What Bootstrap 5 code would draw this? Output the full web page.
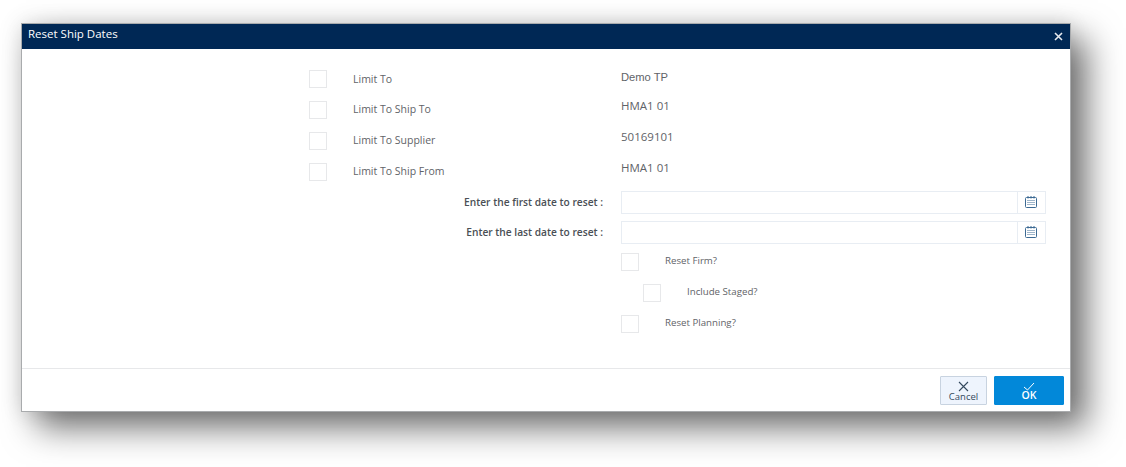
<!DOCTYPE html>
<html lang="en">
<head>
  <meta charset="UTF-8" />
  <meta name="viewport" content="width=device-width, initial-scale=1" />
  <title>Reset Ship Dates</title>
  <link href="https://cdn.jsdelivr.net/npm/bootstrap@5.3.2/dist/css/bootstrap.min.css" rel="stylesheet"/>
  <style>
    body {
      background: #fff;
      font-family: "Open Sans", sans-serif;
      font-size: 10.5px;
      color: #5f6368;
      padding: 23px 0 0 21px;
      min-height: 100vh;
    }
    .dlg {
      width: 1050px;
      height: 389px;
      border: 1px solid #a9abad;
      border-radius: 0;
      box-shadow: 16px 16px 32px rgba(0, 0, 0, 0.55), 0 0 20px rgba(0, 0, 0, 0.12);
    }
    .dlg-head {
      height: 25px;
      background: #002855;
      color: #fff;
      font-size: 11.5px;
      padding: 0 7px 0 6px;
      border-radius: 0 !important;
      border: 0;
    }
    .dlg-head span { margin-top: -6px; }
    .dlg-body { padding: 14px 0 0 287px; }
    .chk-row { height: 31px; }
    .chk {
      width: 18px;
      height: 18px;
      flex: none;
      border: 1px solid #e7e8ea;
      background: #fff;
    }
    .lbl { width: 294px; padding-left: 26px; padding-top: 1px; }
    .lbl-first { padding-top: 2px; }
    .val { font-size: 11.5px; margin-top: -7px; }
    .val-demo { font-family: "Liberation Sans", sans-serif; font-size: 11.2px; margin-top: -3px; }
    .date-row { height: 22px; margin-bottom: 8px; }
    .date-row.last-date { margin-bottom: 3px; }
    .date-lbl {
      width: 312px;
      text-align: right;
      font-weight: 600;
      font-size: 10.2px;
      color: #4a4f55;
      padding-right: 18px;
      padding-top: 2px;
    }
    .date-box {
      width: 425px;
      height: 23px;
      border: 1px solid #e8edf3;
    }
    .date-in { border: 0; outline: 0; min-width: 0; }
    .date-btn {
      width: 28px;
      border-left: 1px solid #e8edf3;
      padding-right: 1px;
    }
    .checks { padding-left: 312px; }
    .sub-row { padding-left: 22px; }
    .sub-row .chk, .top-row .chk { margin-right: 26px; }
    .checks .chk-row { font-size: 9.7px; }
    .checks .chk-row span { margin-top: 0; }
    .dlg-foot {
      height: 43px;
      background: #fff;
      border-top: 1px solid #e7e8ea;
      border-radius: 0 !important;
      padding: 7px 6px 0 0;
    }
    .act {
      height: 29px;
      font-weight: 600;
      line-height: 9px;
      border-radius: 1px;
      padding: 0;
    }
    .act svg { display: block; margin: 1px auto 0; }
    .act-cancel {
      width: 47px;
      font-size: 9.5px;
      font-weight: 500;
      background: #eef4fd;
      border: 1px solid #c8d3e0;
      color: #34495e;
      margin-right: 7px;
    }
    .act-ok {
      width: 70px;
      font-size: 10.5px;
      background: #0288d9;
      border: 1px solid #0288d9;
      color: #fff;
    }
  </style>
</head>
<body>

  <div class="card dlg">
    <div class="card-header dlg-head d-flex align-items-center justify-content-between">
      <span>Reset Ship Dates</span>
      <svg width="9" height="9" viewBox="0 0 9 9"><path d="M1 1l7 7M8 1L1 8" stroke="#e6e9ee" stroke-width="1.6"/></svg>
    </div>

    <div class="card-body dlg-body">
      <div class="d-flex align-items-center chk-row"><div class="chk"></div><div class="lbl lbl-first">Limit To</div><div class="val val-demo">Demo TP</div></div>
      <div class="d-flex align-items-center chk-row"><div class="chk"></div><div class="lbl">Limit To Ship To</div><div class="val">HMA1 01</div></div>
      <div class="d-flex align-items-center chk-row"><div class="chk"></div><div class="lbl">Limit To Supplier</div><div class="val">50169101</div></div>
      <div class="d-flex align-items-center chk-row mb-1"><div class="chk"></div><div class="lbl">Limit To Ship From</div><div class="val">HMA1 01</div></div>

      <div class="d-flex align-items-center date-row">
        <div class="date-lbl">Enter the first date to reset :</div>
        <div class="d-flex date-box">
          <input type="text" class="flex-grow-1 date-in" aria-label="First date" />
          <div class="d-flex align-items-center justify-content-center date-btn">
            <svg width="12" height="12" viewBox="0 0 12 12" fill="none"><rect x=".5" y="1.5" width="11" height="10" rx="1" stroke="#3d6a94"/><path d="M3 0v2.5M6 0v2.5M9 0v2.5" stroke="#3d6a94"/><path d="M2.5 4.5h7M2.5 6.5h7M2.5 8.5h7" stroke="#3d6a94" stroke-dasharray="1 1"/></svg>
          </div>
        </div>
      </div>
      <div class="d-flex align-items-center date-row last-date">
        <div class="date-lbl">Enter the last date to reset :</div>
        <div class="d-flex date-box">
          <input type="text" class="flex-grow-1 date-in" aria-label="Last date" />
          <div class="d-flex align-items-center justify-content-center date-btn">
            <svg width="12" height="12" viewBox="0 0 12 12" fill="none"><rect x=".5" y="1.5" width="11" height="10" rx="1" stroke="#3d6a94"/><path d="M3 0v2.5M6 0v2.5M9 0v2.5" stroke="#3d6a94"/><path d="M2.5 4.5h7M2.5 6.5h7M2.5 8.5h7" stroke="#3d6a94" stroke-dasharray="1 1"/></svg>
          </div>
        </div>
      </div>

      <div class="checks">
        <div class="d-flex align-items-center chk-row top-row"><div class="chk"></div><span>Reset Firm?</span></div>
        <div class="d-flex align-items-center chk-row sub-row"><div class="chk"></div><span>Include Staged?</span></div>
        <div class="d-flex align-items-center chk-row top-row"><div class="chk"></div><span>Reset Planning?</span></div>
      </div>
    </div>

    <div class="card-footer dlg-foot d-flex justify-content-end align-items-start">
      <button type="button" class="btn act act-cancel">
        <svg width="11" height="11" viewBox="0 0 11 11"><path d="M1 1l9 9M10 1l-9 9" stroke="#34495e" stroke-width="1.1"/></svg>
        Cancel
      </button>
      <button type="button" class="btn act act-ok">
        <svg width="12" height="9" viewBox="0 0 12 9" fill="none"><path d="M1 5l3.5 3L11 1" stroke="#fff" stroke-width="1"/></svg>
        OK
      </button>
    </div>
  </div>

  <script src="https://cdn.jsdelivr.net/npm/bootstrap@5.3.2/dist/js/bootstrap.bundle.min.js"></script>
</body>
</html>
